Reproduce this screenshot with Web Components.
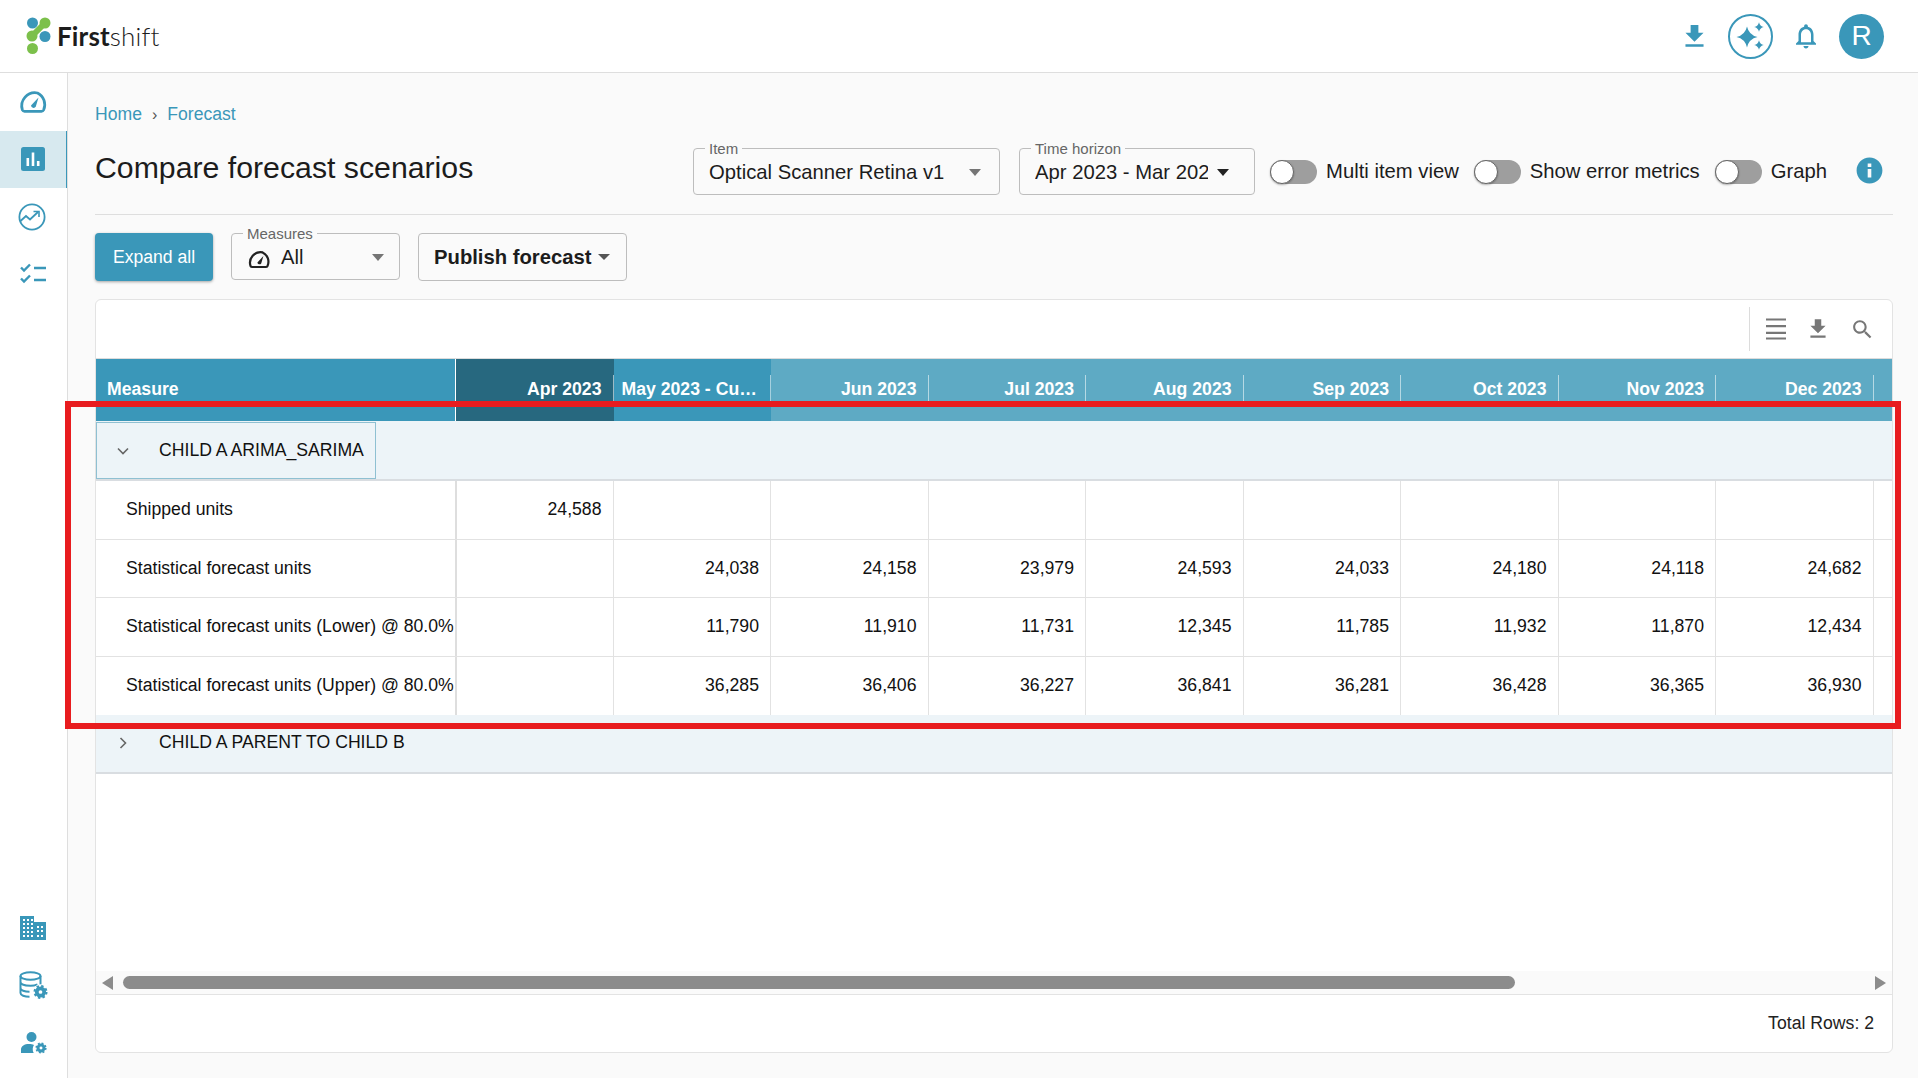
<!DOCTYPE html>
<html>
<head>
<meta charset="utf-8">
<title>Firstshift</title>
<style>
html, body { margin: 0; height: 100%; overflow: hidden; background: #fafafa; }
body { font-family: "Liberation Sans", Arial, sans-serif; color: #1c1c1c; }
</style>
</head>
<body>
<fs-app>
    <fs-header slot="header"></fs-header>
    <fs-sidebar slot="sidebar"></fs-sidebar>
    <fs-breadcrumb><a>Home</a><a>Forecast</a></fs-breadcrumb>
    <fs-title-row>
        <span slot="title">Compare forecast scenarios</span>
        <fs-select label="Item" width="307" value="Optical Scanner Retina v1"></fs-select>
        <fs-select label="Time horizon" width="236" value="Apr 2023 - Mar 202" dark></fs-select>
        <fs-toggle>Multi item view</fs-toggle>
        <fs-toggle>Show error metrics</fs-toggle>
        <fs-toggle>Graph</fs-toggle>
        <fs-info></fs-info>
    </fs-title-row>
    <fs-toolbar>
        <fs-button>Expand all</fs-button>
        <fs-select label="Measures" width="169" value="All" gauge></fs-select>
        <fs-publish>Publish forecast</fs-publish>
    </fs-toolbar>
    <fs-table></fs-table>
</fs-app>
<fs-highlight></fs-highlight>

<script>
const BLUE = '#3a97b9';

const ICONS = {
    download: 'M19 9h-4V3H9v6H5l7 7 7-7zM5 18v2h14v-2H5z',
    bell: 'M12 22c1.1 0 2-.9 2-2h-4c0 1.1.9 2 2 2zm6-6v-5c0-3.07-1.63-5.64-4.5-6.32V4c0-.83-.67-1.5-1.5-1.5s-1.5.67-1.5 1.5v.68C7.64 5.36 6 7.92 6 11v5l-2 2v1h16v-1l-2-2zm-2 1H8v-6c0-2.48 1.51-4.5 4-4.5s4 2.02 4 4.5v6z',
    search: 'M15.5 14h-.79l-.28-.27C15.41 12.59 16 11.11 16 9.5 16 5.91 13.09 3 9.5 3S3 5.91 3 9.5 5.91 16 9.5 16c1.61 0 3.09-.59 4.23-1.57l.27.28v.79l5 4.99L20.49 19l-4.99-5zm-6 0C7.01 14 5 11.99 5 9.5S7.01 5 9.5 5 14 7.01 14 9.5 11.99 14 9.5 14z',
    info: 'M12 2C6.48 2 2 6.48 2 12s4.48 10 10 10 10-4.48 10-10S17.52 2 12 2zm1.4 15.5h-2.8v-6.6h2.8v6.6zm0-8.2h-2.8V6.6h2.8v2.7z'
};

function icon(name, size, color) {
    return `<svg width="${size}" height="${size}" viewBox="0 0 24 24" fill="${color}"><path d="${ICONS[name]}"/></svg>`;
}

function gaugeIcon(size, color) {
    return `<svg width="${size}" height="${size}" viewBox="0 0 24 24" fill="none" stroke="${color}" stroke-width="2.2" stroke-linecap="round">
        <path d="M5.2 21h13.6c.8 0 1.4-.4 1.7-1A10.4 10.4 0 0 0 15.6 6.4 10.6 10.6 0 0 0 3.5 20c.3.6.9 1 1.7 1z"/>
        <path d="M10.4 16.4l6-6.4-2.2 7.4a2.1 2.1 0 0 1-3.8-1z" fill="${color}" stroke="none"/>
    </svg>`;
}

// white halo, ring and eight teeth
function gear(cx, cy, r) {
    return `<circle cx="${cx}" cy="${cy}" r="${r * 1.3}" fill="#fff" stroke="none"/>
        <circle cx="${cx}" cy="${cy}" r="${r * 0.62}" fill="#fff" stroke="${BLUE}" stroke-width="${r * 0.62}"/>
        <circle cx="${cx}" cy="${cy}" r="${r}" fill="none" stroke="${BLUE}" stroke-width="${r * 0.34}" stroke-dasharray="${r * 0.4} ${r * 0.385}"/>`;
}

function star(x, y, r) {
    return `M${x} ${y - r}Q${x + r * 0.18} ${y - r * 0.18} ${x + r} ${y}Q${x + r * 0.18} ${y + r * 0.18} ${x} ${y + r}Q${x - r * 0.18} ${y + r * 0.18} ${x - r} ${y}Q${x - r * 0.18} ${y - r * 0.18} ${x} ${y - r}Z`;
}

class FsApp extends HTMLElement {
    constructor() {
        super();
        this.attachShadow({mode: 'open'}).innerHTML = `
<style>
:host { display: grid; grid-template-columns: 68px 1fr; grid-template-rows: 73px 1005px; width: 1918px; height: 1078px; }
.top { grid-column: 1 / 3; }
main { display: flex; flex-direction: column; padding: 0 25px 0 27px; min-width: 0; }
</style>
<div class="top"><slot name="header"></slot></div>
<slot name="sidebar"></slot>
<main><slot></slot></main>`;
    }
}

class FsHeader extends HTMLElement {
    constructor() {
        super();
        this.attachShadow({mode: 'open'}).innerHTML = `
<style>
:host { display: flex; align-items: center; height: 73px; box-sizing: border-box; background: #fff; border-bottom: 1px solid #dedede; padding: 0 34px 0 26px; }
.logo { display: flex; align-items: center; gap: 4px; }
.word { font: 300 26px/1 Lato, sans-serif; color: #1c1c1c; letter-spacing: .15px; }
.word b { font-weight: 700; }
.right { margin-left: auto; display: flex; align-items: center; gap: 18px; }
svg { display: block; }
.avatar { width: 45px; height: 45px; border-radius: 50%; background: ${BLUE}; color: #fff; display: flex; align-items: center; justify-content: center; font-size: 28px; }
</style>
<div class="logo">
    <svg width="27" height="38" viewBox="0 0 27 38">
        <path d="M19 6 L6 19" stroke="#7cc04b" stroke-width="6" fill="none"/>
        <circle cx="6.500" cy="6" r="5.500" fill="${BLUE}"/>
        <circle cx="19" cy="6" r="5.500" fill="#7cc04b"/>
        <circle cx="6" cy="19" r="5.500" fill="#7cc04b"/>
        <circle cx="19" cy="19.500" r="5.500" fill="${BLUE}"/>
        <circle cx="6.500" cy="31.500" r="5.500" fill="#7cc04b"/>
    </svg>
    <span class="word"><b>First</b>shift</span>
</div>
<div class="right">
    ${icon('download', 31, BLUE)}
    <svg width="45" height="45" viewBox="0 0 45 45">
        <circle cx="22.500" cy="22.500" r="21.500" fill="none" stroke="${BLUE}" stroke-width="2"/>
        <path fill="${BLUE}" d="${star(19, 23, 10.5)}${star(31, 13, 4.8)}${star(31, 31, 4.8)}"/>
    </svg>
    ${icon('bell', 30, BLUE)}
    <div class="avatar">R</div>
</div>`;
    }
}

class FsSidebar extends HTMLElement {
    constructor() {
        super();
        this.attachShadow({mode: 'open'}).innerHTML = `
<style>
:host { display: flex; flex-direction: column; background: #fff; border-right: 1px solid #dedede; box-sizing: border-box; height: 1005px; padding-bottom: 6px; }
.item { height: 57.500px; display: flex; align-items: center; justify-content: center; box-sizing: border-box; }
.active { background: #d7e9ef; border-right: 1px solid ${BLUE}; height: 57px; }
.gap { flex: 1; }
svg { display: block; }
</style>
<div class="item" style="padding:0 2px 4px 0">${gaugeIcon(30, BLUE)}</div>
<div class="item active">
    <svg width="24" height="24" viewBox="0 0 24 24">
        <rect width="24" height="24" rx="2.500" fill="${BLUE}"/>
        <path d="M5.500 11h2.600v8H5.500zM10.700 5.500h2.600V19h-2.600zM15.900 14h2.600v5h-2.600z" fill="#fff"/>
    </svg>
</div>
<div class="item" style="padding:2px 4px 0 0">
    <svg width="28" height="28" viewBox="0 0 28 28" fill="none" stroke="${BLUE}" stroke-width="1.800">
        <circle cx="14" cy="14" r="12.600"/>
        <path d="M2.500 18l5.500-5 4 3.500 8-7.500"/>
        <path d="M15.500 8.500h5.500v5.500" stroke-width="1.600"/>
    </svg>
</div>
<div class="item" style="padding-right:1px">
    <svg width="26" height="22" viewBox="0 0 26 22" fill="none" stroke="${BLUE}" stroke-width="2.400">
        <path d="M1 4.500l3 3 6-6M1 15.500l3 3 6-6"/>
        <path d="M14 5h12M14 17h12"/>
    </svg>
</div>
<div class="gap"></div>
<div class="item" style="padding-right:1px">
    <svg width="26" height="24" viewBox="0 0 26 24">
        <path fill="${BLUE}" fill-rule="evenodd" d="M0 0h14v6h12v18H0z"/>
        <path fill="#fff" d="M3 3h2v2H3zM7 3h2v2H7zM11 3h2v2h-2zM3 7h2v2H3zM7 7h2v2H7zM11 7h2v2h-2zM3 11h2v2H3zM7 11h2v2H7zM11 11h2v2h-2zM3 15h2v2H3zM7 15h2v2H7zM11 15h2v2h-2zM3 19h2v2H3zM7 19h2v2H7zM11 19h2v2h-2zM17 10h2v2h-2zM21 10h2v2h-2zM17 14h2v2h-2zM21 14h2v2h-2zM17 19h2v2h-2zM21 19h2v2h-2z"/>
    </svg>
</div>
<div class="item">
    <svg width="29" height="29" viewBox="0 0 29 29" fill="none" stroke="${BLUE}" stroke-width="2">
        <ellipse cx="11.500" cy="5" rx="10" ry="3.800"/>
        <path d="M1.500 5v17c0 2.200 4 3.800 9 3.800M21.500 5v9M1.500 11c0 2.200 4 3.800 10 3.800 3 0 5-.4 7-1.300M1.500 17c0 2.200 4 3.800 9 3.800"/>
        ${gear(21.5, 21, 6)}
    </svg>
</div>
<div class="item">
    <svg width="26" height="22" viewBox="0 0 26 22" fill="${BLUE}">
        <circle cx="10.500" cy="5" r="5"/>
        <path d="M0 21v-3.500c0-3.500 3.500-5.500 8-5.500 2 0 3.500.3 5 1-1.500 2-1.800 5.500-.3 8z"/>
        ${gear(20, 16, 4.800)}
    </svg>
</div>`;
    }
}

class FsBreadcrumb extends HTMLElement {
    constructor() {
        super();
        this.attachShadow({mode: 'open'}).innerHTML = `
<style>
:host { display: block; height: 24px; margin-top: 29px; font-size: 17.600px; line-height: 24px; color: ${BLUE}; }
</style>
<slot></slot>`;
    }
    connectedCallback() {
        const links = [...this.querySelectorAll('a')];
        if (links.length > 1 && !this.querySelector('i')) {
            const sep = document.createElement('i');
            sep.textContent = '›';
            sep.style.cssText = 'font-style:normal;margin:0 10px;color:#555;font-size:16px';
            links[0].after(sep);
        }
    }
}

class FsTitleRow extends HTMLElement {
    constructor() {
        super();
        this.attachShadow({mode: 'open'}).innerHTML = `
<style>
:host { display: flex; align-items: center; height: 47px; margin-top: 22px; padding-bottom: 19px; border-bottom: 1px solid #dedede; }
.title { font-size: 30.250px; font-weight: 400; color: #1c1c1c; margin-right: auto; position: relative; top: -4px; }
.controls { display: flex; align-items: center; padding-right: 8px; }
::slotted(fs-select:nth-of-type(2)) { margin-left: 19px; }
</style>
<div class="title"><slot name="title"></slot></div>
<div class="controls"><slot></slot></div>`;
    }
}

class FsSelect extends HTMLElement {
    constructor() {
        super();
        this.attachShadow({mode: 'open'});
    }
    connectedCallback() {
        const width = this.getAttribute('width');
        const dark = this.hasAttribute('dark');
        const gauge = this.hasAttribute('gauge') ? gaugeIcon(24, '#222') : '';
        this.shadowRoot.innerHTML = `
<style>
:host { display: block; position: relative; width: ${width}px; height: 47px; box-sizing: border-box; }
.box { display: flex; align-items: center; gap: 9px; height: 100%; box-sizing: border-box; border: 1px solid #bdbdbd; border-radius: 4px; padding: 2px ${dark ? 25 : gauge ? 15 : 18}px 0 15px; font-size: 20.250px; white-space: nowrap; }
.value { flex: 1; overflow: hidden; }
.arrow { width: 0; height: 0; border: 6.500px solid transparent; border-top: 7px solid ${dark ? '#222' : '#757575'}; border-bottom: 0; flex: none; }
.label { position: absolute; left: 12px; top: -7px; padding: 0 4px; background: #fafafa; color: #666; font-size: 15px; line-height: 16px; }
svg { display: block; flex: none; margin-right: 1px; }
</style>
<div class="box">${gauge}<span class="value">${this.getAttribute('value')}</span><span class="arrow"></span></div>
<span class="label">${this.getAttribute('label')}</span>`;
    }
}

class FsToggle extends HTMLElement {
    constructor() {
        super();
        this.attachShadow({mode: 'open'}).innerHTML = `
<style>
:host { display: flex; align-items: center; gap: 9px; font-size: 20.250px; margin-left: 15px; white-space: nowrap; }
.track { width: 47px; height: 24px; border-radius: 12px; background: #9e9e9e; display: flex; flex: none; }
.knob { width: 24px; height: 24px; box-sizing: border-box; border-radius: 50%; background: #fff; border: 1px solid #666; box-shadow: 0 1px 2px rgba(0,0,0,.3); }
</style>
<div class="track"><div class="knob"></div></div>
<slot></slot>`;
    }
}

class FsInfo extends HTMLElement {
    constructor() {
        super();
        this.attachShadow({mode: 'open'}).innerHTML = `
<style>:host { display: block; margin: 0 0 2px 27px; height: 31px; } svg { display: block; }</style>
${icon('info', 31, BLUE)}`;
    }
}

class FsToolbar extends HTMLElement {
    constructor() {
        super();
        this.attachShadow({mode: 'open'}).innerHTML = `
<style>:host { display: flex; gap: 18px; height: 48px; margin-top: 18px; }</style>
<slot></slot>`;
    }
}

class FsButton extends HTMLElement {
    constructor() {
        super();
        this.attachShadow({mode: 'open'}).innerHTML = `
<style>
:host { display: flex; align-items: center; justify-content: center; width: 118px; height: 48px; border-radius: 4px; background: ${BLUE}; color: #fff; font-size: 17.600px; box-shadow: 0 1px 3px rgba(0,0,0,.35); }
</style>
<slot></slot>`;
    }
}

class FsPublish extends HTMLElement {
    constructor() {
        super();
        this.attachShadow({mode: 'open'}).innerHTML = `
<style>
:host { display: flex; align-items: center; gap: 6px; width: 209px; height: 48px; box-sizing: border-box; padding-left: 15px; border: 1px solid #bdbdbd; border-radius: 4px; font-size: 20.250px; font-weight: 700; color: #1c1c1c; }
.arrow { width: 0; height: 0; border: 6px solid transparent; border-top: 6px solid #555; border-bottom: 0; }
</style>
<slot></slot><span class="arrow"></span>`;
    }
}

class FsTable extends HTMLElement {
    constructor() {
        super();
        const months = ['Apr 2023', 'May 2023 - Cu…', 'Jun 2023', 'Jul 2023', 'Aug 2023', 'Sep 2023', 'Oct 2023', 'Nov 2023', 'Dec 2023'];
        const rows = [
            ['Shipped units', '24,588', '', '', '', '', '', '', '', ''],
            ['Statistical forecast units', '', '24,038', '24,158', '23,979', '24,593', '24,033', '24,180', '24,118', '24,682'],
            ['Statistical forecast units (Lower) @ 80.0%', '', '11,790', '11,910', '11,731', '12,345', '11,785', '11,932', '11,870', '12,434'],
            ['Statistical forecast units (Upper) @ 80.0%', '', '36,285', '36,406', '36,227', '36,841', '36,281', '36,428', '36,365', '36,930']
        ];
        const head = months.map((m, i) => {
            const cls = i === 0 ? 'cur' : i === 1 ? 'may' : 'fut';
            return `<div class="h ${cls}"><span class="lbl">${m}</span></div>`;
        }).join('');
        const body = rows.map((r, ri) => `<div class="row${ri === rows.length - 1 ? ' last' : ''}">
            <div class="c m"><span>${r[0]}</span></div>
            ${r.slice(1).map((v, i) => `<div class="c${i === 0 ? ' first' : ''}">${v}</div>`).join('')}
            <div class="c end"></div>
        </div>`).join('');
        this.attachShadow({mode: 'open'}).innerHTML = `
<style>
:host { display: flex; flex-direction: column; height: 754px; box-sizing: border-box; margin-top: 18px; background: #fff; border: 1px solid #e3e3e3; border-radius: 6px; font-size: 17.650px; color: #111; overflow: hidden; }
.tools { height: 58px; flex: none; display: flex; align-items: center; justify-content: flex-end; box-sizing: border-box; padding: 0 17px 0 0; }
.tools .div { width: 1px; height: 44px; background: #dcdcdc; margin-right: 16px; }
.tools svg { display: block; }
.row, .head { display: grid; grid-template-columns: 360px repeat(9, 157.500px) 1fr; }
.head { height: 63px; flex: none; border-top: 1px solid #dcdcdc; box-sizing: border-box; color: #fff; font-weight: 700; background: #5eaac4; }
.h { padding-top: 16px; box-sizing: border-box; min-width: 0; }
.lbl { display: block; height: 26px; line-height: 29px; text-align: right; padding-right: 11px; border-right: 1px solid rgba(255,255,255,.55); white-space: nowrap; overflow: hidden; }
.h.measure { background: ${BLUE}; border-right: 1px solid #fff; }
.h.measure .lbl { text-align: left; padding-left: 11px; border: 0; }
.h.cur { background: #27687f; }
.h.may { background: ${BLUE}; }
.h.may .lbl { text-align: left; padding-left: 8px; padding-right: 0; }
.group { height: 60px; flex: none; box-sizing: border-box; background: #edf4f8; border-bottom: 2px solid #d9dde1; display: flex; align-items: stretch; }
.gcell { display: flex; align-items: center; padding-left: 19px; box-sizing: border-box; }
.gcell.focus { width: 280px; margin-top: 1px; border: 1px solid #8fc0d2; padding-left: 19px; }
.gcell svg { display: block; margin-right: 29px; flex: none; }
.row { height: 58.500px; box-sizing: border-box; border-bottom: 1px solid #e2e2e2; }
.row.last { border-bottom: 0; height: 58px; }
.c { border-right: 1px solid #e2e2e2; display: flex; align-items: center; justify-content: flex-end; padding-right: 11px; box-sizing: border-box; min-width: 0; }
.c.m { justify-content: flex-start; padding: 0 0 0 30px; border-right: 1px solid #dedede; white-space: nowrap; overflow: hidden; }
.c.first { border-left: 1px solid #dedede; }
.c.end { border-right: 0; }
.fill { flex: 1; }
.hscroll { height: 23px; flex: none; background: #fafafa; display: flex; align-items: center; padding: 0 6px 0 6px; gap: 10px; border-bottom: 1px solid #e3e3e3; box-sizing: content-box; }
.thumb { width: 1392px; height: 13px; border-radius: 7px; background: #8c8c8c; }
.tri { width: 0; height: 0; border-top: 7px solid transparent; border-bottom: 7px solid transparent; }
.tri.l { border-right: 11px solid #8c8c8c; }
.tri.r { border-left: 11px solid #8c8c8c; margin-left: auto; }
.foot { height: 57px; flex: none; display: flex; align-items: center; justify-content: flex-end; padding-right: 18px; color: #222; }
</style>
<div class="tools">
    <span class="div"></span>
    <svg width="20" height="22" viewBox="0 0 20 22" style="margin-right:19px"><path d="M0 1.500h20M0 8.200h20M0 14.800h20M0 20.500h20" stroke="#777" stroke-width="2.200"/></svg>
    <span style="margin-right:19px;height:26px">${icon('download', 26, '#777')}</span>
    ${icon('search', 25, '#777')}
</div>
<div class="head">
    <div class="h measure"><span class="lbl">Measure</span></div>
    ${head}
</div>
<div class="group">
    <div class="gcell focus">
        <svg width="14" height="14" viewBox="0 0 14 14" fill="none" stroke="#666" stroke-width="1.600"><path d="M2 4.500l5 5 5-5"/></svg>
        <span>CHILD A ARIMA_SARIMA</span>
    </div>
</div>
${body}
<div class="group" style="height:59px">
    <div class="gcell" style="padding-left:20px">
        <svg width="14" height="14" viewBox="0 0 14 14" fill="none" stroke="#666" stroke-width="1.600"><path d="M4.500 2l5 5-5 5"/></svg>
        <span style="padding-bottom:2px">CHILD A PARENT TO CHILD B</span>
    </div>
</div>
<div class="fill"></div>
<div class="hscroll"><span class="tri l"></span><span class="thumb"></span><span class="tri r"></span></div>
<div class="foot">Total Rows: 2</div>`;
    }
}

class FsHighlight extends HTMLElement {
    constructor() {
        super();
        this.attachShadow({mode: 'open'}).innerHTML = `
<style>
:host { position: absolute; left: 65px; top: 401px; width: 1836px; height: 328px; box-sizing: border-box; border: 6px solid #e81c1f; pointer-events: none; }
</style>`;
    }
}

customElements.define('fs-app', FsApp);
customElements.define('fs-header', FsHeader);
customElements.define('fs-sidebar', FsSidebar);
customElements.define('fs-breadcrumb', FsBreadcrumb);
customElements.define('fs-title-row', FsTitleRow);
customElements.define('fs-select', FsSelect);
customElements.define('fs-toggle', FsToggle);
customElements.define('fs-info', FsInfo);
customElements.define('fs-toolbar', FsToolbar);
customElements.define('fs-button', FsButton);
customElements.define('fs-publish', FsPublish);
customElements.define('fs-table', FsTable);
customElements.define('fs-highlight', FsHighlight);
</script>
</body>
</html>
